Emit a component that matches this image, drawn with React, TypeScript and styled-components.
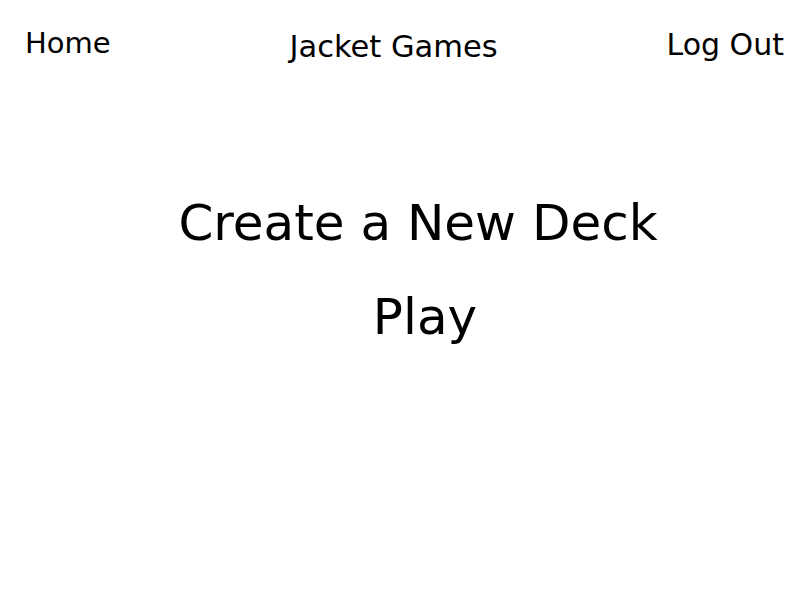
import React from "react";
import styled, { createGlobalStyle } from "styled-components";

const Global = createGlobalStyle`
  html, body { margin: 0; padding: 0; background: #fff; }
  body { font-family: "DejaVu Sans", Verdana, sans-serif; color: #000; }
`;

const Page = styled.div`
  display: flex;
  flex-direction: column;
  width: 800px;
  height: 600px;
`;

const NavBar = styled.nav`
  display: flex;
  justify-content: space-between;
  align-items: flex-start;
  padding: 29px 16px 0 25px;
`;

const NavLink = styled.a<{ $size: number; $offset: number; $nudge?: number }>`
  font-size: ${(p) => p.$size}px;
  line-height: 1;
  margin-top: ${(p) => p.$offset}px;
  margin-left: ${(p) => p.$nudge ?? 0}px;
  color: #000;
  text-decoration: none;
  cursor: pointer;
`;

const Menu = styled.main`
  display: flex;
  flex-direction: column;
  align-items: center;
  gap: 34px;
  margin-top: 130px;
  padding-left: 36px;
`;

const MenuItem = styled.a<{ $shift?: number }>`
  font-size: 50px;
  line-height: 1.2;
  margin-left: ${(p) => p.$shift ?? 0}px;
  color: #000;
  text-decoration: none;
  cursor: pointer;
`;

export default function App() {
  return (
    <>
      <Global />
      <Page>
        <NavBar>
          <NavLink $size={29} $offset={0}>Home</NavLink>
          <NavLink $size={30.5} $offset={3} $nudge={10}>Jacket Games</NavLink>
          <NavLink $size={30} $offset={1}>Log Out</NavLink>
        </NavBar>
        <Menu>
          <MenuItem>Create a New Deck</MenuItem>
          <MenuItem $shift={14}>Play</MenuItem>
        </Menu>
      </Page>
    </>
  );
}
